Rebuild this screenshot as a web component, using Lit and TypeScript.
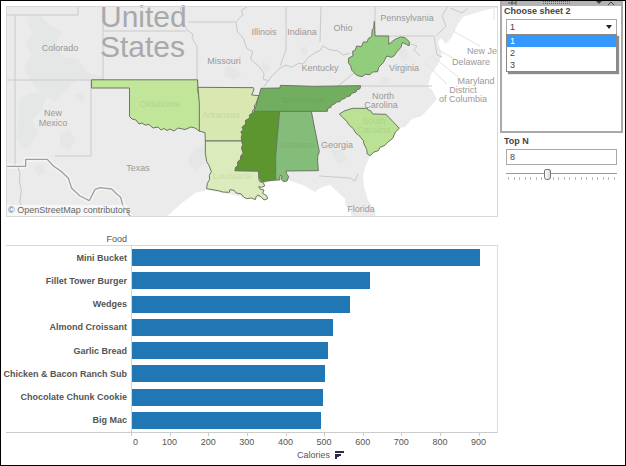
import { LitElement, html, svg, css } from "lit";
import { customElement, state } from "lit/decorators.js";

const AXIS_MAX = 950;

const foods = [
  { name: "Mini Bucket", calories: 905 },
  { name: "Fillet Tower Burger", calories: 620 },
  { name: "Wedges", calories: 568 },
  { name: "Almond Croissant", calories: 524 },
  { name: "Garlic Bread", calories: 510 },
  { name: "Chicken & Bacon Ranch Sub", calories: 502 },
  { name: "Chocolate Chunk Cookie", calories: 498 },
  { name: "Big Mac", calories: 491 },
];

const axisTicks = [0, 100, 200, 300, 400, 500, 600, 700, 800, 900];

const mapLabels = [
  { text: "Colorado", x: 60, y: 51 },
  { text: "New", x: 53, y: 116 },
  { text: "Mexico", x: 53, y: 126 },
  { text: "Texas", x: 138, y: 171 },
  { text: "Missouri", x: 224, y: 64 },
  { text: "Illinois", x: 264, y: 35 },
  { text: "Indiana", x: 302, y: 35 },
  { text: "Ohio", x: 343, y: 31 },
  { text: "Kentucky", x: 320, y: 71 },
  { text: "Pennsylvania", x: 407, y: 21 },
  { text: "Virginia", x: 404, y: 71 },
  { text: "North", x: 383, y: 99 },
  { text: "Carolina", x: 381, y: 108 },
  { text: "New Je", x: 482, y: 54 },
  { text: "Delaware", x: 471, y: 65 },
  { text: "Maryland", x: 476, y: 84 },
  { text: "District", x: 463, y: 93 },
  { text: "of Columbia", x: 463, y: 102 },
  { text: "Georgia", x: 337, y: 148 },
  { text: "Florida", x: 361, y: 212 },
];

const shadedLabels = [
  { text: "Oklahoma", x: 160, y: 107 },
  { text: "Arkansas", x: 221, y: 118 },
  { text: "Louisiana", x: 232, y: 179 },
  { text: "Tennessee", x: 302, y: 103 },
  { text: "Alabama", x: 297, y: 148 },
  { text: "South", x: 374, y: 124 },
  { text: "Carolina", x: 374, y: 133 },
];

@customElement("state-map")
class StateMap extends LitElement {
  static styles = css`
    :host { display: block; }
    svg { display: block; width: 100%; height: auto; overflow: visible; }
    text { font-family: "Liberation Sans", Arial, sans-serif; font-size: 9px; }
    .water { fill: #fff; }
    .land { fill: #ebebeb; }
    .relief { fill: #e1e5e3; opacity: 0.6; }
    .border { fill: none; stroke: #cacaca; stroke-width: 1; }
    .river { fill: none; stroke: #c6c6c6; stroke-width: 3; stroke-linejoin: round; }
    .mexico { fill: none; stroke: #a0a0a0; stroke-width: 4; stroke-linejoin: round; }
    .halo { fill: none; stroke: #fff; stroke-width: 14; opacity: 0.45; stroke-linejoin: round; }
    .leader { fill: none; stroke: #e2e2e2; stroke-width: 1; }
    .edge { fill: none; stroke: #d8d8d8; stroke-width: 1; }
    .label { fill: #999; text-anchor: middle; }
    .shaded { fill: #4d6b3a; opacity: 0.12; text-anchor: middle; }
    .country { fill: #a9a9a9; font-size: 30px; }
    .credit-back { fill: #fff; opacity: 0.6; }
    .credit { fill: #666; }
    .state { stroke: #6c7660; stroke-width: 1; stroke-linejoin: round; }
    .third { stroke-width: 3; }
    .ok { fill: #c1e599; }
    .ar { fill: #d8e8b0; }
    .la { fill: #dcebbb; }
    .ms { fill: #5d962f; }
    .al { fill: #84bc79; }
    .tn { fill: #71ae60; }
    .wv { fill: #92cc7d; }
    .sc { fill: #bbe294; }
  `;

  render() {
    return html`
      <svg viewBox="6 6 492 211" role="img" aria-label="Map of the southern United States">
        <rect class="water" x="6" y="6" width="492" height="211" />
        <path class="land" d="M6 6H498V8L490 9 478 12 463 17 458 24 452 37 446 44 441 38 438 42 442 55 437 66 431 74 428 86 432 90 437 99 430 107 422 116 412 119 405 127 399 128 392 139 380 148 370 156 366 165 363 176 364 187 368 200 374 210 376 217H352L350 210 346 206 345 199 340 194 330 185 322 187 315 192 305 186 288 180 272 181 262 184 264 196 255 199 240 196 207 190 195 193 182 203 166 217H6Z" />
        <path class="relief" d="M26 17l14-2 10 10 12 6-6 14 8 12 14 2 10 14 16 4-8 6-20-4-8 10-14 12-12-6-10-12-8-16 8-12-6-10 6-12z" />
        <path class="relief" d="M20 98l14-6 12 4-4 14-10 10 6 14-12 16-10-12 2-18zM60 134l8-4 8 8-6 12-10-4zM74 96l6-4 5 6-4 4zM34 166l8-2 4 8-8 4z" />
        <path class="relief" d="M198 148l6-4 4 8-4 12-8 6-8-6 2-10zM226 66l10 2 6 8-8 4-10-4zM262 62l6 2 2 6-6 2zM300 48l6-2 2 6-5 4zM330 150l12 0 6 10-10 4zM396 48l10 2 4 8-8 4zM382 76l8 2-2 6-8 0z" />
        <g>
          <path class="border" d="M6 15H78V6M15 15V166M15 80H103V15M103 31H186M91 80V156H55M6 80H15M197 80V46L192 38 193 34 188 31 183 22 180 6M188 22H235M198 88V80M361 86H432M395 36H434L437 55 442 57M320 42L321 6M375 6V36H396M286 6V50L280 66M338 86L354 73M436 36L446 26 442 16 448 6M319 176L350 178 355 181 358 174M317 112V106M420 56L414 50 417 46 411 44M450 8l12 5 6-5" />
          <path class="leader" d="M453 31L480 46M437 49L456 60M431 55L458 77M424 62L447 84M494 9V20" />
          <g transform="translate(200 0) scale(0.33333)">
            <path class="river" d="M142 20L125 30 128 45 108 65 112 95 130 115 140 145 158 155 152 178 178 200 192 220 190 238 206 242 215 228 240 205 258 195 275 202 295 190 310 192 322 175 345 158 360 152 368 138 390 150 412 152 430 165 450 160M206 242L190 262" />
          </g>
          <g transform="translate(0 110) scale(0.33333)">
            <path class="halo" d="M18 169H77V148H142L160 168 185 185 205 205 215 235 240 258 268 272 285 238 300 233 335 237 350 252 362 262 368 285 390 318" />
            <path class="mexico" d="M18 169H77V148H142L160 168 185 185 205 205 215 235 240 258 268 272 285 238 300 233 335 237 350 252 362 262 368 285 390 318" />
            <path class="river" d="M54 172L60 190 58 215 64 240 60 275 64 290" />
          </g>
        </g>

        ${mapLabels.map((l) => svg`<text class="label" x=${l.x} y=${l.y}>${l.text}</text>`)}
        <text class="country" x="100" y="27">United</text>
        <text class="country" x="100" y="57">States</text>

        <path class="state ok" d="M91.500 79.800H197.500L198 92 200 102V131.500L195 128 191 127 185 129.500 178 128 174 131 170 129 167 130.500 164 128.500 161 130 158 127 153 128 149 124.500 145 125 142 123 139 124 136 120 132 119 129.500 116.500V88H91.500Z" />
        <g transform="translate(190 70) scale(0.33333)">
          <path class="state third ar" d="M24 52L190 53 192 58 185 75 207 77 203 88 198 100 193 108 194 116 187 122 188 128 178 136 180 144 166 152 168 162 156 172 160 178 153 186 157 194 154 202 155 213H46L45 188 28 183V100Z" />
          <path class="state third la" d="M46 213H155L158 224 155 235 160 250 152 258 152 268 143 276 144 286 137 292 135 302 205 303 209 313 206 325 209 335 220 338 224 348 214 352 206 350 211 358 222 360 218 370 230 377 233 386 222 390 214 381 204 375 198 380 196 389 184 384 170 386 160 381 154 372 138 369 133 361 120 359 118 367 98 366 85 362 50 356 52 340 59 328 58 316 64 305 58 288 50 275 46 250Z" />
          <path class="state third ms" d="M192 124H269L262 200 257 260 258 330 240 332 215 335 207 323 205 303 135 302 137 292 144 286 143 276 152 268 152 258 160 250 155 235 158 224 154 202 157 194 153 186 160 178 156 172 168 162 166 152 180 144 178 136 188 128Z" />
          <path class="state third al" d="M269 124H364L375 180 384 225 388 245 383 258 383 275 385 302 288 303 290 312 296 320 291 333 280 335 274 328 276 318 270 316 269 330 257 330V260L262 200Z" />
          <path class="state third tn" d="M213 55L270 54 271 46 370 49 512 47 510 56 500 60 498 66 485 70 480 78 470 80 464 86 455 88 450 95 440 96 434 102 425 105 422 113 414 114 412 124H192L198 108 203 88 207 77Z" />
        </g>
        <g transform="translate(200 0) scale(0.33333)">
          <path class="state third wv" d="M523 64L525 108H566V133L585 118 602 111 615 113 628 125 628 137 620 134 607 127 603 142 590 156 582 168 574 172 560 168 550 188 536 202 533 215 518 216 510 224 496 223 486 230 470 226 455 210 452 198 445 188 446 174 459 168 458 154 466 150 470 138 484 140 490 126 502 126 505 115 515 110 517 88 521 85Z" />
        </g>
        <g transform="translate(330 90) scale(0.33333)">
          <path class="state third sc" d="M28 72L45 62 68 55H112L114 60 122 62 128 72 168 73 208 115 196 126 188 145 172 158 165 166 150 172 145 182 132 186 120 197 112 192 110 178 102 162 100 152 86 135 78 130 70 116 58 106 50 94 40 84Z" />
        </g>
        ${shadedLabels.map((l) => svg`<text class="shaded" x=${l.x} y=${l.y}>${l.text}</text>`)}

        <rect class="credit-back" x="7" y="205" width="120" height="11" />
        <text class="credit" x="8" y="213">© OpenStreetMap contributors</text>
        <rect class="edge" x="6.500" y="6.500" width="491" height="210" />
      </svg>
    `;
  }
}

@customElement("calorie-chart")
class CalorieChart extends LitElement {
  static styles = css`
    :host { display: flex; flex-direction: column; color: #555; }
    .heading, .row, .axis, .title { display: grid; grid-template-columns: 125px minmax(0, 1fr); }
    .heading { line-height: 12px; }
    .heading span, .name { display: flex; justify-content: flex-end; padding-right: 4px; white-space: nowrap; }
    .rows {
      flex: 1; display: grid; grid-auto-rows: minmax(20px, 1fr);
      border-top: 1px solid #d9d6d3; border-bottom: 1px solid #ccc; border-right: 1px solid #ddd;
    }
    .name { font-weight: bold; align-self: center; }
    .cell { display: flex; align-items: center; border-left: 1px solid #d4d4d4; }
    .bar { height: 17px; background: #2077b4; }
    .scale { grid-column: 2; display: flex; }
    .tick { flex: none; }
    .mark { width: 1px; height: 3px; background: #ccc; }
    .value { display: flex; justify-content: center; width: 0; line-height: 13px; }
    .tick:first-child .value { justify-content: flex-start; padding-left: 2px; }
    .title { line-height: 12px; }
    .caption { grid-column: 2; display: flex; justify-content: center; align-items: center; gap: 5px; padding-left: 12px; }
    .sort { display: block; width: 9px; height: 8px; fill: #2b2b45; }
  `;

  render() {
    const step = (100 / AXIS_MAX) * 100;
    return html`
      <div class="heading"><span>Food</span></div>
      <div class="rows">
        ${foods.map(
          (f) => html`
            <div class="row">
              <div class="name">${f.name}</div>
              <div class="cell"><div class="bar" style="width:${(f.calories / AXIS_MAX) * 100}%"></div></div>
            </div>
          `
        )}
      </div>
      <div class="axis">
        <div class="scale">
          ${axisTicks.map(
            (t) => html`
              <div class="tick" style="width:${t === 900 ? step / 2 : step}%">
                <div class="mark"></div>
                <div class="value">${t}</div>
              </div>
            `
          )}
        </div>
      </div>
      <div class="title">
        <div class="caption">
          <span>Calories</span>
          <svg class="sort" viewBox="0 0 9 8" aria-hidden="true">
            <path d="M0 0H9V2H0ZM0 3H6V5H0ZM0 5H4V6H0ZM0 6H2V8H0Z" />
          </svg>
        </div>
      </div>
    `;
  }
}

@customElement("filter-panel")
class FilterPanel extends LitElement {
  static styles = css`
    :host { display: block; color: #444; }
    .card { border: 2px solid #a9a9a9; border-top: 0; min-height: 132px; box-sizing: border-box; }
    .grip { display: flex; justify-content: space-between; height: 5px; background: #b4b4b4; padding: 0 6px; }
    .grip svg { display: block; height: 5px; }
    .pin { width: 10px; }
    .dots { width: 28px; }
    .tools { width: 20px; }
    .label { display: block; font-weight: bold; line-height: 12px; padding-left: 4px; }
    .card .label { padding-left: 2px; line-height: 11px; }
    .drop { position: relative; margin: 2px 4px 0; }
    select, input { font: inherit; color: inherit; margin: 0; box-sizing: border-box; border-radius: 0; outline: 0; }
    select {
      display: block; appearance: none; width: 100%; height: 16px; padding: 0 3px;
      border: 1px solid #aaa; background: #fff;
    }
    .arrow { position: absolute; right: 5px; top: 6px; width: 6px; height: 4px; fill: #222; pointer-events: none; }
    .list {
      position: absolute; top: 15px; left: 0; right: 0; margin: 0; padding: 0; list-style: none;
      box-sizing: border-box; border: 1px solid #888; background: #fff; box-shadow: 2px 2px 1px #8c8c8c;
    }
    .list li { line-height: 12px; padding-left: 3px; cursor: default; }
    .list li[aria-selected="true"] { background: #3498fc; color: #fff; }
    .top { padding-top: 2px; }
    .number { display: block; width: calc(100% - 12px); height: 16px; margin: 2px 6px 0; padding: 0 3px; border: 1px solid #aaa; background: #fff; }
    .range { appearance: none; display: block; width: calc(100% - 12px); height: 11px; margin: 4px 6px 0; padding: 0; background: linear-gradient(#9a9a9a, #9a9a9a) 0 4px / 100% 1px no-repeat; }
    .range::-webkit-slider-thumb {
      appearance: none; box-sizing: border-box; width: 7px; height: 11px;
      border: 1px solid #777; border-radius: 2px 2px 3px 3px; background: linear-gradient(90deg, #fff, #d8d8d8);
    }
    .ticks { display: flex; justify-content: space-between; margin: -3px 8px 0; }
    .ticks span { width: 1px; height: 3px; background: #bbb; }
    .ticks span:nth-child(8) { visibility: hidden; }
  `;

  @state() sheet = 1;
  @state() topN = 8;

  render() {
    const sheets = [1, 2, 3];
    return html`
      <div class="card">
        <div class="grip" aria-hidden="true">
          <svg class="pin" viewBox="0 0 10 5"><path d="M0 2H4M4 0V4M4 2H8M8 0V4" fill="none" stroke="#555" /></svg>
          <svg class="dots" viewBox="0 0 28 5"><path d="M0 .5H28M0 2.500H28" fill="none" stroke="#666" stroke-dasharray="1 1" /></svg>
          <svg class="tools" viewBox="0 0 20 5"><path d="M1 0H7L4 3Z" fill="#444" /><path d="M13 4L16 1 19 4" fill="none" stroke="#444" /></svg>
        </div>
        <label class="label" for="sheet">Choose sheet 2</label>
        <div class="drop">
          <select id="sheet" @change=${(e: Event) => (this.sheet = Number((e.target as HTMLSelectElement).value))}>
            ${sheets.map((n) => html`<option value=${n} ?selected=${n === this.sheet}>${n}</option>`)}
          </select>
          <svg class="arrow" viewBox="0 0 6 4" aria-hidden="true"><path d="M0 0H6L3 4Z" /></svg>
          <ul class="list" role="listbox" aria-label="Choose sheet 2">
            ${sheets.map(
              (n) => html`<li role="option" aria-selected=${n === this.sheet ? "true" : "false"} @click=${() => (this.sheet = n)}>${n}</li>`
            )}
          </ul>
        </div>
      </div>
      <div class="top">
        <label class="label" for="topn">Top N</label>
        <input id="topn" class="number" type="text" .value=${String(this.topN)} />
        <input class="range" type="range" min="1" max="20" .value=${String(this.topN)} aria-label="Top N"
          @input=${(e: Event) => (this.topN = Number((e.target as HTMLInputElement).value))} />
        <div class="ticks" aria-hidden="true">${Array.from({ length: 20 }, () => html`<span></span>`)}</div>
      </div>
    `;
  }
}

@customElement("app-root")
class AppRoot extends LitElement {
  static styles = css`
    :host { display: block; }
    .frame {
      box-sizing: border-box; min-height: 100vh; border: 1px solid #000; background: #fff;
      display: grid; grid-template-columns: minmax(0, 1fr) 123px; gap: 2px; padding: 0 2px 4px 5px;
      font-family: "Liberation Sans", Arial, sans-serif; font-size: 9px;
    }
    .main { display: flex; flex-direction: column; gap: 16px; padding-top: 5px; }
    .chart { flex: 1; }
  `;

  render() {
    return html`
      <div class="frame">
        <main class="main">
          <state-map></state-map>
          <calorie-chart class="chart"></calorie-chart>
        </main>
        <aside><filter-panel></filter-panel></aside>
      </div>
    `;
  }
}
